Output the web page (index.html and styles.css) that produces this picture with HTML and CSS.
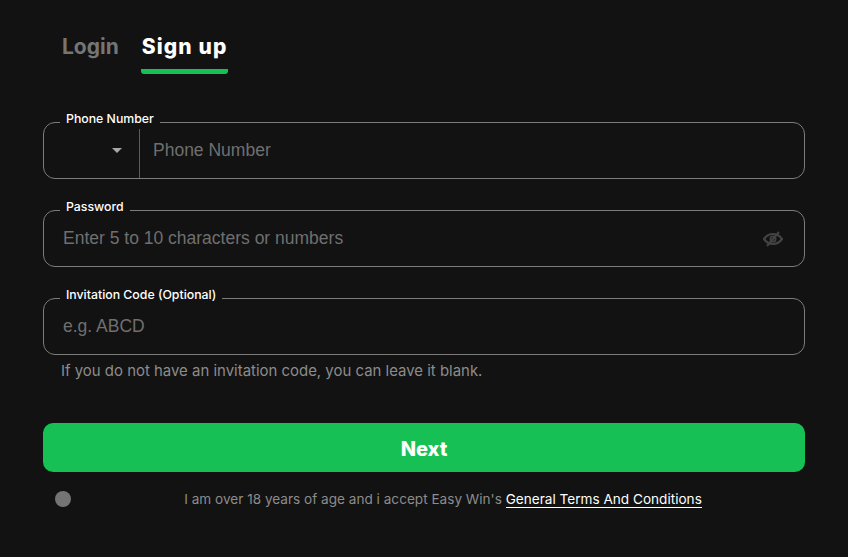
FILE: index.html
```html
<!DOCTYPE html>
<html>
<head>
    <link rel="stylesheet" href="styles.css">
</head>
<body>
    <div class="tabs">
        <div class="tab">Login</div>
        <div class="tab active">Sign up</div>
    </div>

    <form class="form">
        <div class="field">
            <span class="field-label">Phone Number</span>
            <div class="country"><span class="caret"></span></div>
            <input class="field-input phone-input" type="text" placeholder="Phone Number">
        </div>

        <div class="field">
            <span class="field-label">Password</span>
            <input class="field-input" type="text" placeholder="Enter 5 to 10 characters or numbers">
            <svg class="eye" viewBox="0 0 20 16">
                <path d="M1 8c2.400-3.400 5.400-5 9-5s6.600 1.600 9 5c-2.400 3.400-5.400 5-9 5s-6.600-1.600-9-5z" fill="none" stroke="#434343" stroke-width="2.200"/>
                <circle cx="10" cy="8" r="2.600" fill="none" stroke="#434343" stroke-width="1.800"/>
                <line x1="4" y1="15" x2="16" y2="1" stroke="#434343" stroke-width="2"/>
            </svg>
        </div>

        <div class="field field-last">
            <span class="field-label">Invitation Code (Optional)</span>
            <input class="field-input" type="text" placeholder="e.g. ABCD">
        </div>
        <p class="hint">If you do not have an invitation code, you can leave it blank.</p>

        <button class="next" type="button">Next</button>

        <div class="terms">
            <span class="radio"></span>
            <p class="terms-text">I am over 18 years of age and i accept Easy Win's <a href="#">General Terms And Conditions</a></p>
        </div>
    </form>
</body>
</html>
```

FILE: styles.css
```css
* {
    box-sizing: border-box;
}
body {
    margin: 0;
    height: 557px;
    overflow: hidden;
    background-color: #121212;
    font-family: Inter, "Liberation Sans", sans-serif;
    color: #fff;
}
.tabs {
    display: flex;
    gap: 22px;
    padding: 33px 0 0 62px;
    height: 122px;
}
.tab {
    height: 41px;
    font-size: 21px;
    line-height: 28px;
    font-weight: 700;
    white-space: nowrap;
    color: #757575;
}
.active {
    color: #fff;
    width: 87px;
    padding-left: 1px;
    font-weight: 800;
    letter-spacing: 1.1px;
    border-bottom: 5px solid #16c055;
    border-radius: 0 0 3px 3px;
}
.form {
    padding: 0 43px;
}
.field {
    position: relative;
    display: flex;
    align-items: center;
    height: 57px;
    margin-bottom: 31px;
    border: 1px solid #7c7c7c;
    border-radius: 12px;
}
.field-last {
    margin-bottom: 6px;
}
.field-label {
    position: absolute;
    top: -14px;
    left: 16px;
    padding: 0 6px;
    background: linear-gradient(transparent 13px, #121212 13px);
    font-size: 12.300px;
    line-height: 20px;
    font-weight: 500;
}
.field-input {
    flex: 1;
    height: 100%;
    padding: 0 19px;
    border: none;
    outline: none;
    background: none;
    font-family: "Liberation Sans", Arial, sans-serif;
    font-size: 17.500px;
    color: #fff;
}
.field-input::placeholder {
    color: #6f6f6f;
    opacity: 1;
}
.phone-input {
    padding-left: 13px;
}
.country {
    display: flex;
    justify-content: flex-end;
    align-items: center;
    width: 96px;
    height: 100%;
    padding-right: 17px;
    border-right: 1px solid #5c5c5c;
}
.caret {
    border-left: 5px solid transparent;
    border-right: 5px solid transparent;
    border-top: 5px solid #a8a8a8;
}
.eye {
    width: 20px;
    height: 16px;
    margin-right: 21px;
}
.hint {
    margin: 0 0 42px 18px;
    font-size: 14.950px;
    line-height: 20px;
    color: #8c8c8c;
}
.next {
    display: block;
    width: 100%;
    height: 49px;
    padding-top: 4px;
    border: none;
    border-radius: 10px;
    background-color: #16c055;
    font-family: Inter, sans-serif;
    font-size: 20px;
    font-weight: 800;
    color: #fff;
}
.terms {
    display: flex;
    align-items: center;
    height: 20px;
    margin-top: 17px;
    padding-left: 12px;
}
.radio {
    width: 16px;
    height: 16px;
    border-radius: 50%;
    background-color: #747474;
}
.terms-text {
    flex: 1;
    margin: 0;
    padding-left: 10px;
    text-align: center;
    font-size: 13.600px;
    line-height: 20px;
    color: #8c8c8c;
}
.terms-text a {
    color: #fff;
    text-decoration: none;
    border-bottom: 1px solid #fff;
}
```
